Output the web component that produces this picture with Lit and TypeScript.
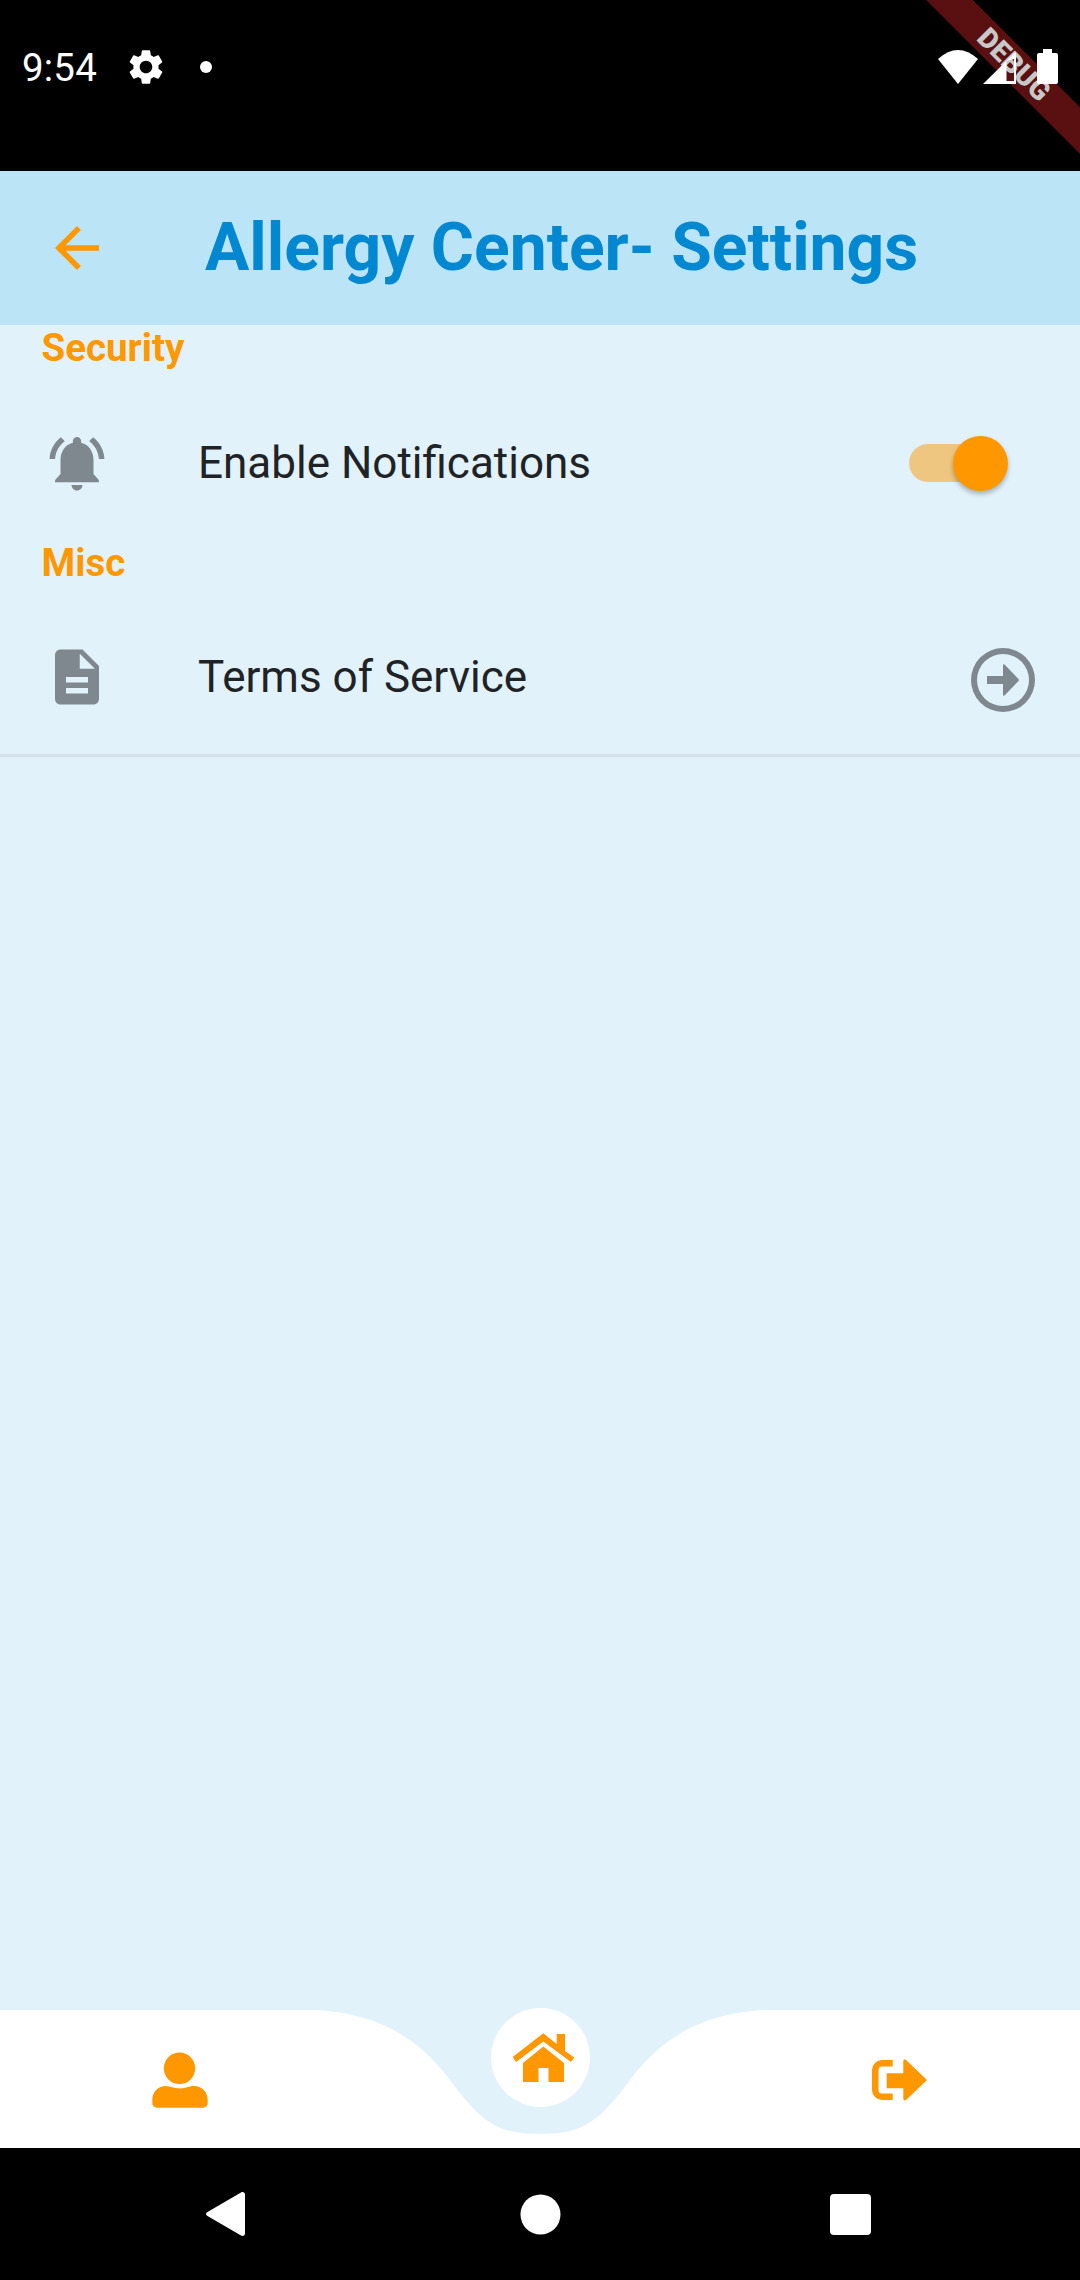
import { LitElement, html, css } from "lit";
import { customElement } from "lit/decorators.js";

@customElement("app-root")
export class AppRoot extends LitElement {
  static styles = css`
    :host { display: block; width: 1080px; height: 2280px; font-family: Roboto, "Noto Sans", sans-serif; }
    * { box-sizing: border-box; }
    svg { display: block; flex: none; }
    .page { width: 1080px; height: 2280px; display: flex; flex-direction: column; background: #e1f2fb; overflow: hidden; }

    .status { height: 171px; background: #000; position: relative; overflow: hidden; flex: none; display: flex; align-items: flex-start; padding: 46px 22px 0 22px; color: #fff; }
    .time { font-size: 38.5px; line-height: 44px; letter-spacing: 0.2px; font-weight: 400; position: relative; z-index: 1; }
    .gear { margin: 0 0 0 28px; position: relative; z-index: 1; }
    .dot { width: 12px; height: 12px; border-radius: 50%; background: #fff; margin: 15px 0 0 33px; position: relative; z-index: 1; }
    .sys { margin: 3px 0 0 auto; position: relative; z-index: 1; }
    .banner { position: absolute; left: 864px; top: 48px; width: 300px; height: 33px; background: #5a1010; transform: rotate(45deg); display: flex; align-items: center; justify-content: center; color: #c8c8c8; font-size: 28px; font-weight: 900; }

    .appbar { height: 154px; background: #bbe4f7; flex: none; display: flex; align-items: center; padding-left: 44px; }
    .title { margin-left: 95px; font-size: 66px; font-weight: 700; line-height: 78px; color: #0288d1; white-space: nowrap; }

    .body { flex: 1; display: flex; flex-direction: column; }
    .section { font-size: 38.5px; font-weight: 700; line-height: 45px; color: #ff9800; padding-left: 41.5px; }
    .row { height: 170px; display: flex; align-items: center; padding: 16px 0 0 44px; color: #1f2326; font-size: 44px; }
    .row .label { margin-left: 88px; flex: 1; }
    .terms { height: 172px; padding-top: 14px; border-bottom: 3px solid #d3e2ea; padding-right: 45px; }
    .go { margin-top: 7px; }
    .switch { width: 91px; height: 38px; border-radius: 19px; background: #efc680; position: relative; margin-right: 80px; }
    .thumb { position: absolute; right: -8px; top: -8.5px; width: 55px; height: 55px; border-radius: 50%; background: #ff9800; box-shadow: 0 3px 5px rgba(0,0,0,0.28); }

    .nav { height: 138px; flex: none; position: relative; display: grid; grid-template-columns: repeat(3, 1fr); }
    .wave { position: absolute; inset: 0; }
    .cell { position: relative; display: flex; justify-content: center; }
    .person { margin-top: 40px; }
    .home { width: 99px; height: 99px; margin-top: -2px; }
    .logout { margin-top: 40px; }

    .sysnav { height: 132px; background: #000; flex: none; display: flex; align-items: center; padding-left: 206px; }
    .sysnav .circle { margin-left: 274px; }
    .sysnav .square { margin-left: 269px; }
  `;

  render() {
    return html`<div class="page">
      <div class="status">
        <div class="banner">DEBUG</div>
        <span class="time">9:54</span>
        <svg class="gear" width="42" height="42" viewBox="0 0 24 24" fill="#fff"><path d="M19.14 12.94c.04-.3.06-.61.06-.94 0-.32-.02-.64-.07-.94l2.03-1.58c.18-.14.23-.41.12-.61l-1.92-3.32c-.12-.22-.37-.29-.59-.22l-2.39.96c-.5-.38-1.03-.7-1.62-.94l-.36-2.54c-.04-.24-.24-.41-.48-.41h-3.84c-.24 0-.43.17-.47.41l-.36 2.54c-.59.24-1.13.57-1.62.94l-2.39-.96c-.22-.08-.47 0-.59.22L2.74 8.87c-.12.21-.08.47.12.61l2.03 1.58c-.05.3-.09.63-.09.94s.02.64.07.94l-2.03 1.58c-.18.14-.23.41-.12.61l1.92 3.32c.12.22.37.29.59.22l2.39-.96c.5.38 1.03.7 1.62.94l.36 2.54c.05.24.24.41.48.41h3.84c.24 0 .44-.17.47-.41l.36-2.54c.59-.24 1.13-.56 1.62-.94l2.39.96c.22.08.47 0 .59-.22l1.92-3.32c.12-.22.07-.47-.12-.61l-2.01-1.58zM12 15.6c-1.98 0-3.6-1.62-3.6-3.6s1.62-3.6 3.6-3.6 3.6 1.62 3.6 3.6-1.62 3.6-3.6 3.6z"/></svg>
        <span class="dot"></span>
        <svg class="sys" width="120" height="36" viewBox="938 49 120 36" fill="#fff">
          <path d="M938 59 Q958 41 978 59 L958 84 Z"/>
          <path fill-rule="evenodd" d="M983 84 L1016 51.5 V84 Z M1006.5 61 V81 H1014 V59 Z"/>
          <path d="M1043 49 h9 v4 h4 a2 2 0 0 1 2 2 v27 a2 2 0 0 1 -2 2 h-17 a2 2 0 0 1 -2 -2 v-27 a2 2 0 0 1 2 -2 h4 z"/>
        </svg>
      </div>

      <div class="appbar">
        <svg width="66" height="66" viewBox="0 0 24 24" fill="#ff9800"><path d="M20 11H7.83l5.59-5.59L12 4l-8 8 8 8 1.41-1.41L7.83 13H20v-2z"/></svg>
        <span class="title">Allergy Center- Settings</span>
      </div>

      <div class="body">
        <div class="section">Security</div>
        <div class="row">
          <svg width="66" height="66" viewBox="0 0 24 24" fill="#7f888e"><path d="M7.58 4.08L6.15 2.65C3.75 4.48 2.17 7.3 2.03 10.5h2c.15-2.65 1.51-4.97 3.55-6.42zm12.39 6.42h2c-.15-3.2-1.73-6.02-4.12-7.85l-1.42 1.43c2.02 1.45 3.39 3.77 3.54 6.42z"/><path d="M18 16v-5c0-3.07-1.63-5.64-4.5-6.32V4c0-.83-.67-1.5-1.5-1.5s-1.5.67-1.5 1.5v.68C7.64 5.36 6 7.92 6 11v5l-1.7 1.9c-.3.4-.3.6-.3 1.1h16c0-.5 0-.7-.3-1.1L18 16zM12 22c1.1 0 2-.9 2-2h-4c0 1.1.9 2 2 2z"/></svg>
          <span class="label">Enable Notifications</span>
          <div class="switch"><div class="thumb"></div></div>
        </div>
        <div class="section">Misc</div>
        <div class="row terms">
          <svg width="66" height="66" viewBox="0 0 24 24" fill="#7f888e"><path d="M14 2H6c-1.1 0-1.99.9-1.99 2L4 20c0 1.1.89 2 1.99 2H18c1.1 0 2-.9 2-2V8l-6-6zm2 16H8v-2h8v2zm0-4H8v-2h8v2zm-3-5V3.5L18.5 9H13z"/></svg>
          <span class="label">Terms of Service</span>
          <svg class="go" width="64" height="64" viewBox="0 0 64 64" fill="#7f888e"><path fill-rule="evenodd" d="M32 0a32 32 0 1 0 0 64a32 32 0 1 0 0-64zM32 6a26 26 0 1 1 0 52a26 26 0 1 1 0-52z"/><path d="M16 28h16v-10.5c0-1.2 1-1.6 1.8-.8L47.5 31c.6.6.6 1.4 0 2L33.8 47.3c-.8.8-1.8.4-1.8-.8V36H16z"/></svg>
        </div>
      </div>

      <nav class="nav">
        <svg class="wave" width="1080" height="138" viewBox="0 0 1080 138" fill="#fff"><path d="M0 0H315C380 3 420 30 450 70C480 110 495 124 540 124C585 124 600 110 630 70C660 30 700 3 765 0H1080V138H0Z"/></svg>
        <div class="cell">
          <svg class="person" width="80" height="70" viewBox="0 0 80 70" fill="#ff9800"><circle cx="39.5" cy="18.3" r="15.7"/><path d="M12.3 53V50C12.3 42 18 36 26 36C30 36 34 38.5 39.8 38.5C45.5 38.5 49 36 53.5 36C62 36 67.7 42 67.7 50V53A4.5 4.5 0 0 1 63.2 57.7H16.8A4.5 4.5 0 0 1 12.3 53Z"/></svg>
        </div>
        <div class="cell">
          <svg class="home" width="99" height="99" viewBox="0 0 99 99"><circle cx="49.5" cy="49.5" r="49.5" fill="#fff"/><g transform="translate(-1,-3)" fill="#ff9800"><path d="M22.7 52L53.3 28.3L66.7 39V29H75V46L84.3 52.5L81 57L53.3 36.5L26 57Z"/><path d="M53.3 41.5L74 58V77H58.5V63H48.5V77H33V58Z"/></g></svg>
        </div>
        <div class="cell">
          <svg class="logout" width="80" height="60" viewBox="0 0 80 60" fill="#ff9800"><path d="M32.7 10H22A10 10 0 0 0 12 20V40A10 10 0 0 0 22 50H32.7V43.5H22A3.5 3.5 0 0 1 18.5 40V20A3.5 3.5 0 0 1 22 16.5H32.7Z"/><path d="M26.7 23.3H43.3V11.5C43.3 9.5 45 9 46 10L66 29C66.8 29.7 66.8 30.3 66 31L46 50C45 51 43.3 50.5 43.3 48.5V38.3H26.7Z"/></svg>
        </div>
      </nav>

      <div class="sysnav">
        <svg width="40" height="46" viewBox="0 0 40 46" fill="#fff"><path d="M1.5 21L35 1.5C37 .5 39 1.5 39 3.5V42.5C39 44.5 37 45.5 35 44.5L1.5 25C-.5 24 -.5 22 1.5 21Z"/></svg>
        <svg class="circle" width="41" height="41" viewBox="0 0 41 41" fill="#fff"><circle cx="20.5" cy="20.5" r="20"/></svg>
        <svg class="square" width="41" height="41" viewBox="0 0 41 41" fill="#fff"><rect width="41" height="41" rx="4"/></svg>
      </div>
    </div>`;
  }
}
